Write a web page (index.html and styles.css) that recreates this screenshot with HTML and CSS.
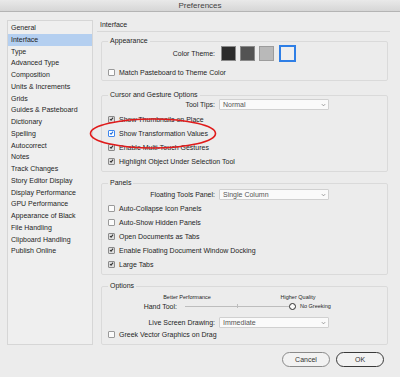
FILE: index.html
```html
<!DOCTYPE html>
<html lang="en">
<head>
    <meta charset="UTF-8">
    <title>Preferences</title>
    <link rel="stylesheet" href="styles.css">
</head>
<body>
<div class="window">
    <div class="titlebar">Preferences</div>

    <div class="content">
        <ul class="sidebar">
            <li>General</li>
            <li class="active">Interface</li>
            <li>Type</li>
            <li>Advanced Type</li>
            <li>Composition</li>
            <li>Units &amp; Increments</li>
            <li>Grids</li>
            <li>Guides &amp; Pasteboard</li>
            <li>Dictionary</li>
            <li>Spelling</li>
            <li>Autocorrect</li>
            <li>Notes</li>
            <li>Track Changes</li>
            <li>Story Editor Display</li>
            <li>Display Performance</li>
            <li>GPU Performance</li>
            <li>Appearance of Black</li>
            <li>File Handling</li>
            <li>Clipboard Handling</li>
            <li>Publish Online</li>
        </ul>

        <div class="panel">
            <div class="panel-title">Interface</div>

            <fieldset class="group appearance">
                <legend>Appearance</legend>
                <div class="row theme-row">
                    <span class="label">Color Theme:</span>
                    <div class="swatches">
                        <span class="swatch dark"></span>
                        <span class="swatch medium"></span>
                        <span class="swatch light"></span>
                        <span class="swatch lightest selected"></span>
                    </div>
                </div>
                <div class="check"><span class="box"></span>Match Pasteboard to Theme Color</div>
            </fieldset>

            <fieldset class="group cursor">
                <legend>Cursor and Gesture Options</legend>
                <div class="row select-row">
                    <span class="label">Tool Tips:</span>
                    <div class="select">Normal<svg class="chev" viewBox="0 0 6 4"><path d="M1 1 L3 3 L5 1"/></svg></div>
                </div>
                <div class="check"><span class="box on"><svg viewBox="0 0 8 8"><path d="M1.6 4.2 L3.3 5.9 L6.5 1.9"/></svg></span>Show Thumbnails on Place</div>
                <div class="check"><span class="box on blue"><svg viewBox="0 0 8 8"><path d="M1.6 4.2 L3.3 5.9 L6.5 1.9"/></svg></span>Show Transformation Values</div>
                <div class="check"><span class="box on"><svg viewBox="0 0 8 8"><path d="M1.6 4.2 L3.3 5.9 L6.5 1.9"/></svg></span>Enable Multi-Touch Gestures</div>
                <div class="check"><span class="box on"><svg viewBox="0 0 8 8"><path d="M1.6 4.2 L3.3 5.9 L6.5 1.9"/></svg></span>Highlight Object Under Selection Tool</div>
            </fieldset>

            <fieldset class="group panels">
                <legend>Panels</legend>
                <div class="row select-row">
                    <span class="label">Floating Tools Panel:</span>
                    <div class="select">Single Column<svg class="chev" viewBox="0 0 6 4"><path d="M1 1 L3 3 L5 1"/></svg></div>
                </div>
                <div class="check"><span class="box"></span>Auto-Collapse Icon Panels</div>
                <div class="check"><span class="box"></span>Auto-Show Hidden Panels</div>
                <div class="check"><span class="box on"><svg viewBox="0 0 8 8"><path d="M1.6 4.2 L3.3 5.9 L6.5 1.9"/></svg></span>Open Documents as Tabs</div>
                <div class="check"><span class="box on"><svg viewBox="0 0 8 8"><path d="M1.6 4.2 L3.3 5.9 L6.5 1.9"/></svg></span>Enable Floating Document Window Docking</div>
                <div class="check"><span class="box on"><svg viewBox="0 0 8 8"><path d="M1.6 4.2 L3.3 5.9 L6.5 1.9"/></svg></span>Large Tabs</div>
            </fieldset>

            <fieldset class="group options">
                <legend>Options</legend>
                <div class="slider-labels">
                    <span class="end-label">Better Performance</span>
                    <span class="end-label high">Higher Quality</span>
                </div>
                <div class="hand-row">
                    <span class="hand-label">Hand Tool:</span>
                    <div class="track"><span class="tick"></span></div>
                    <span class="knob"></span>
                    <span class="greek">No Greeking</span>
                </div>
                <div class="row select-row">
                    <span class="label">Live Screen Drawing:</span>
                    <div class="select">Immediate<svg class="chev" viewBox="0 0 6 4"><path d="M1 1 L3 3 L5 1"/></svg></div>
                </div>
                <div class="check"><span class="box"></span>Greek Vector Graphics on Drag</div>
            </fieldset>
        </div>
    </div>

    <div class="buttons">
        <button type="button" class="btn">Cancel</button>
        <button type="button" class="btn primary">OK</button>
    </div>

    <svg class="highlight-ring" width="400" height="377" viewBox="0 0 400 377">
        <ellipse cx="153" cy="133.5" rx="62.5" ry="14.5"/>
    </svg>
</div>
</body>
</html>
```

FILE: styles.css
```css
body {
    margin: 0;
    font-family: "Liberation Sans", Arial, sans-serif;
    font-size: 7px;
    color: #1e1e1e;
}
.window {
    position: relative;
    width: 400px;
    height: 377px;
    background-color: #ececec;
    overflow: hidden;
}
.titlebar {
    height: 11px;
    line-height: 12px;
    text-align: center;
    font-size: 8px;
    color: #3f3f3f;
    background: linear-gradient(#e9e9e9, #d6d6d6);
    border-bottom: 1px solid #b4b4b4;
}
.content {
    display: flex;
    align-items: flex-start;
    margin-top: 8px;
}
.sidebar {
    list-style: none;
    margin: 0 4px 0 7px;
    padding: 1px 0 0;
    width: 84px;
    height: 322px;
    background-color: #efefef;
    border: 1px solid #d6d6d6;
}
.sidebar li {
    height: 11.75px;
    line-height: 11.75px;
    padding-left: 3px;
    white-space: nowrap;
}
.sidebar li.active {
    background-color: #b4cff0;
}
.panel {
    width: 293px;
}
.panel-title {
    height: 11px;
    line-height: 10px;
    padding-left: 3px;
    border-bottom: 1px solid #d8d8d8;
}
.group {
    margin: 7px 2px 0 4px;
    padding: 0 0 3px 5px;
    border: 1px solid #dadada;
    border-radius: 2px;
    min-width: 0;
}
.group legend {
    padding: 0 2px;
    margin-left: 1px;
    line-height: 8px;
    height: 8px;
}
.appearance {
    margin-top: 5px;
    padding-bottom: 3px;
}
.cursor {
    margin-top: 10px;
}
.row {
    display: flex;
    align-items: center;
}
.label {
    width: 108px;
    text-align: right;
    margin-right: 4px;
    white-space: nowrap;
}
.theme-row {
    height: 17px;
    margin-bottom: 5px;
}
.swatches {
    display: flex;
    align-items: center;
    gap: 4px;
    margin-left: 2px;
}
.swatch {
    width: 13px;
    height: 13px;
    border: 1px solid #a8a8a8;
}
.swatch.dark { background-color: #2c2c2c; border-color: #8a8a8a; }
.swatch.medium { background-color: #535353; border-color: #8a8a8a; }
.swatch.light { background-color: #b9b9b9; border-color: #9c9c9c; }
.swatch.lightest {
    background-color: #efefef;
}
.swatch.selected {
    width: 13px;
    height: 13px;
    border: 2px solid #2f7fe6;
    margin-left: 1px;
}
.check {
    display: flex;
    align-items: center;
    height: 14px;
    white-space: nowrap;
}
.appearance .check {
    height: 10px;
}
.box {
    display: flex;
    align-items: center;
    justify-content: center;
    width: 5px;
    height: 5px;
    margin: 0 4px 0 1px;
    border: 1px solid #9a9a9a;
    border-radius: 1px;
    background-color: #fbfbfb;
}
.box svg {
    width: 6px;
    height: 6px;
    fill: none;
    stroke: #333;
    stroke-width: 1.7;
}
.box.on {
    background-color: #dedede;
    border-color: #8a8a8a;
}
.box.blue {
    background-color: #fff;
    border-color: #3d86ee;
}
.box.blue svg {
    stroke: #1f6fe0;
}
.select-row {
    height: 11px;
}
.cursor .select-row {
    margin-bottom: 2px;
}
.panels .select-row {
    margin-top: 2px;
    margin-bottom: 1px;
}
.select {
    display: flex;
    align-items: center;
    justify-content: space-between;
    width: 103px;
    height: 9px;
    padding: 0 2px 0 3px;
    background-color: #fafafa;
    border: 1px solid #d0d0d0;
    border-radius: 1px;
    color: #555;
}
.chev {
    width: 5px;
    height: 4px;
    fill: none;
    stroke: #888;
    stroke-width: 1;
}
.slider-labels {
    display: flex;
    padding-left: 50px;
    margin-top: 3px;
    height: 8px;
    line-height: 8px;
    font-size: 5.5px;
}
.end-label {
    width: 60px;
    text-align: center;
}
.end-label.high {
    width: 50px;
    margin-left: 56px;
}
.hand-row {
    display: flex;
    align-items: center;
    height: 10px;
}
.hand-label {
    width: 70px;
    text-align: right;
    margin-right: 8px;
}
.track {
    display: flex;
    justify-content: center;
    align-items: center;
    width: 104px;
    height: 1px;
    background-color: #bdbdbd;
}
.tick {
    width: 1px;
    height: 4px;
    background-color: #bdbdbd;
}
.knob {
    width: 5px;
    height: 5px;
    border: 1.5px solid #2b2b2b;
    border-radius: 50%;
    background-color: #fafafa;
}
.greek {
    margin-left: 4px;
    font-size: 5.5px;
}
.options .select-row {
    margin-top: 6px;
}
.options .check {
    height: 13px;
}
.buttons {
    display: flex;
    justify-content: flex-end;
    gap: 6px;
    margin: 7px 16px 0 0;
}
.btn {
    width: 48px;
    height: 15px;
    padding: 0;
    font-family: inherit;
    font-size: 7px;
    color: #333;
    background-color: #f2f2f2;
    border: 1px solid #8a8a8a;
    border-radius: 8px;
}
.btn.primary {
    border: 1.5px solid #3a3a3a;
}
.highlight-ring {
    position: absolute;
    left: 0;
    top: 0;
    pointer-events: none;
}
.highlight-ring ellipse {
    fill: none;
    stroke: #e01b1b;
    stroke-width: 1.6;
}
```
